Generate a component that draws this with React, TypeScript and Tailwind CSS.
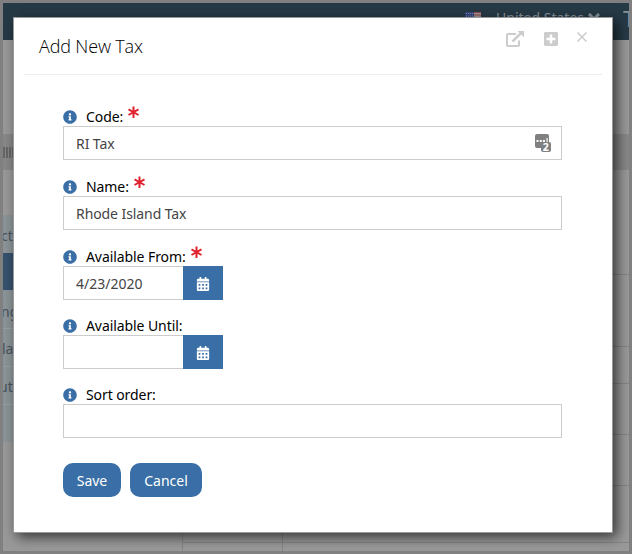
import React from 'react';
import { FaInfoCircle, FaCalendarAlt, FaPlusSquare } from 'react-icons/fa';

interface FieldProps {
  label: string;
  required?: boolean;
  children: React.ReactNode;
}

const sideItems = [
  { text: 'ct', active: false, className: 'h-[38px] pt-1 -indent-[2px]' },
  { text: '', active: true, className: 'h-[37px] bg-[#37526e]' },
  { text: 'ng', active: false, className: 'h-[39px] pt-1.5 border-b border-[#9a9fa1] -indent-[2px]' },
  { text: 'la', active: false, className: 'h-[38px] pt-0.5 border-b border-[#9a9fa1] -indent-px' },
  { text: 'ute', active: false, className: 'h-[38px] pt-0.5 border-b border-[#9a9fa1] -indent-[4px]' },
];

const tableRows = ['h-[105px]', 'h-[72px]', 'h-[37px]', 'h-[51px]', 'h-[51px]', 'h-[57px]'];

const RequiredMark: React.FC = () => (
  <svg width="11" height="12" viewBox="0 0 11 12" className="ml-[5px] -mt-[9px]" fill="none" stroke="#e0232e" strokeWidth="2">
    <path d="M5.5 0.5v11.5M.5 3.4l10 5.6M10.5 3.4l-10 5.6" />
  </svg>
);

const Field: React.FC<FieldProps> = ({ label, required, children }) => (
  <div>
    <label className="flex h-5 items-center text-sm tracking-[-0.08px] text-black">
      <FaInfoCircle className="mt-px mr-[9px] size-[14px] text-[#396fa6]" />
      <span className="pt-0.5">{label}</span>
      {required && <RequiredMark />}
    </label>
    {children}
  </div>
);

const DateInput: React.FC<{ value: string }> = ({ value }) => (
  <div className="flex">
    <input className="h-[34px] w-[120px] border border-r-0 border-[#ccc] px-3 text-sm text-[#444]" defaultValue={value} />
    <button className="flex h-[34px] w-10 items-center justify-center bg-[#396fa6] text-white">
      <FaCalendarAlt className="mt-0.5 size-[14px]" />
    </button>
  </div>
);

const Backdrop: React.FC = () => (
  <div className="h-full overflow-hidden bg-[#999]">
    <div className="flex h-[37px] items-start justify-end bg-[#263a46] text-sm text-[#89939a]">
      <svg width="16" height="11" viewBox="0 0 16 11" className="mt-[9px] mr-[15px]">
        <rect width="16" height="11" fill="#a09496" />
        <path d="M0 .5h16M0 3h16M0 5.5h16M0 8h16M0 10.5h16" stroke="#985048" strokeWidth="1.2" />
        <rect width="9" height="6" fill="#34477f" />
        <path d="M1 1.5h7M1 4h7" stroke="#8390b4" strokeDasharray="1 1" />
      </svg>
      <span className="mt-[5px]">United States</span>
      <svg width="12" height="8" viewBox="0 0 12 8" className="mt-[10px] ml-1 mr-[23px]" fill="none" stroke="#89939a" strokeWidth="3">
        <path d="M1 1l5 5 5-5" />
      </svg>
      <span className="mt-[3px] w-[6px] overflow-hidden text-[22px] leading-6">T</span>
    </div>
    <div className="h-[94px]" />
    <div className="flex h-9 items-center bg-[#888]">
      <div className="flex gap-px">
        <div className="h-[11px] w-0.5 bg-[#666]" />
        <div className="h-[11px] w-0.5 bg-[#666]" />
        <div className="h-[11px] w-0.5 bg-[#666]" />
        <div className="h-[11px] w-px bg-[#666]" />
      </div>
    </div>
    <div className="flex h-[381px]">
      <div className="w-[180px] shrink-0 border-r border-[#858585] pt-[45px] text-sm text-[#47535c]">
        <div className="h-[227px] bg-[#8b9498]">
          {sideItems.map((item) => (
            <div key={item.text} className={`flex items-center ${item.className}`}>{item.text}</div>
          ))}
        </div>
      </div>
      <div className="flex-1">
        {tableRows.map((height, i) => (
          <div key={i} className={`flex border-b border-[#858585] ${height}`}>
            <div className="w-[100px] border-r border-[#858585]" />
          </div>
        ))}
        <div className="h-2 w-[100px] border-r border-[#858585]" />
      </div>
    </div>
  </div>
);

export default function App() {
  return (
    <div className="relative h-[554px] w-[632px] overflow-hidden border-[3px] border-[#808080] font-['Noto_Sans','Open_Sans',sans-serif]">
      <Backdrop />
      <div className="absolute top-[14px] left-[10px] h-[516px] w-[600px] border border-[#999] bg-white px-[10px] shadow-[4px_4px_12px_rgba(0,0,0,0.65)]">
        <div className="flex h-[57px] justify-between border-b border-[#ececec] px-[15px]">
          <h2 className="pt-4 font-['Open_Sans',sans-serif] text-[18px] leading-6 font-light tracking-[-0.15px] text-black">Add New Tax</h2>
          <div className="flex pt-[13px] text-[#ccc]">
            <svg width="18" height="16" viewBox="0 0 18 16" className="mr-[19px]" fill="none" stroke="currentColor" strokeWidth="2">
              <path d="M10 3H2Q1 3 1 4v10q0 1 1 1h10q1 0 1-1V9.5" />
              <path d="M6.5 10.5L15 2.2" strokeWidth="2.5" />
              <path d="M11.5 0H18v6.2z" fill="currentColor" stroke="none" />
            </svg>
            <FaPlusSquare className="mr-[17px] size-4 text-[#ccc]" />
            <svg width="12" height="12" viewBox="0 0 12 12" className="-mr-px" fill="none" stroke="currentColor" strokeWidth="1.5">
              <path d="M1.5 1.5l9 9M10.5 1.5l-9 9" />
            </svg>
          </div>
        </div>
        <form className="px-[39px] pt-[31px]">
          <div className="space-y-4">
            <Field label="Code:" required>
              <div className="flex h-[34px] w-[499px] items-center justify-between border border-[#ccc] pr-[10px]">
                <input className="h-full flex-1 px-3 text-sm tracking-[-0.08px] text-[#444]" defaultValue="RI Tax" />
                <svg width="16" height="18" viewBox="0 0 16 18" fill="#808080">
                  <rect width="14" height="14" rx="2" />
                  <path d="M1.5 6h2v2h-2zM4.8 6h2v2h-2zM8 6h2v2H8zM11.5 4h1.2v4h-1.2z" fill="#fff" />
                  <rect x="6" y="8" width="10" height="10" rx="2" />
                  <text x="7.8" y="16.8" fontSize="10.5" fontWeight="700" fill="#fff">2</text>
                </svg>
              </div>
            </Field>
            <Field label="Name:" required>
              <input className="block h-[34px] w-[499px] border border-[#ccc] px-3 text-sm tracking-[-0.08px] text-[#444]" defaultValue="Rhode Island Tax" />
            </Field>
            <Field label="Available From:" required>
              <DateInput value="4/23/2020" />
            </Field>
          </div>
          <div className="space-y-[15px] pt-[15px]">
            <Field label="Available Until:">
              <DateInput value="" />
            </Field>
            <Field label="Sort order:">
              <input className="block h-[34px] w-[499px] border border-[#ccc] px-3 text-sm text-[#444]" />
            </Field>
          </div>
          <div className="flex gap-[9px] pt-[25px] text-sm text-white">
            <button type="button" className="h-[34px] w-[58px] rounded-[10px] bg-[#396fa6] pt-0.5">Save</button>
            <button type="button" className="h-[34px] w-[72px] rounded-[10px] bg-[#396fa6] pt-0.5">Cancel</button>
          </div>
        </form>
      </div>
    </div>
  );
}
